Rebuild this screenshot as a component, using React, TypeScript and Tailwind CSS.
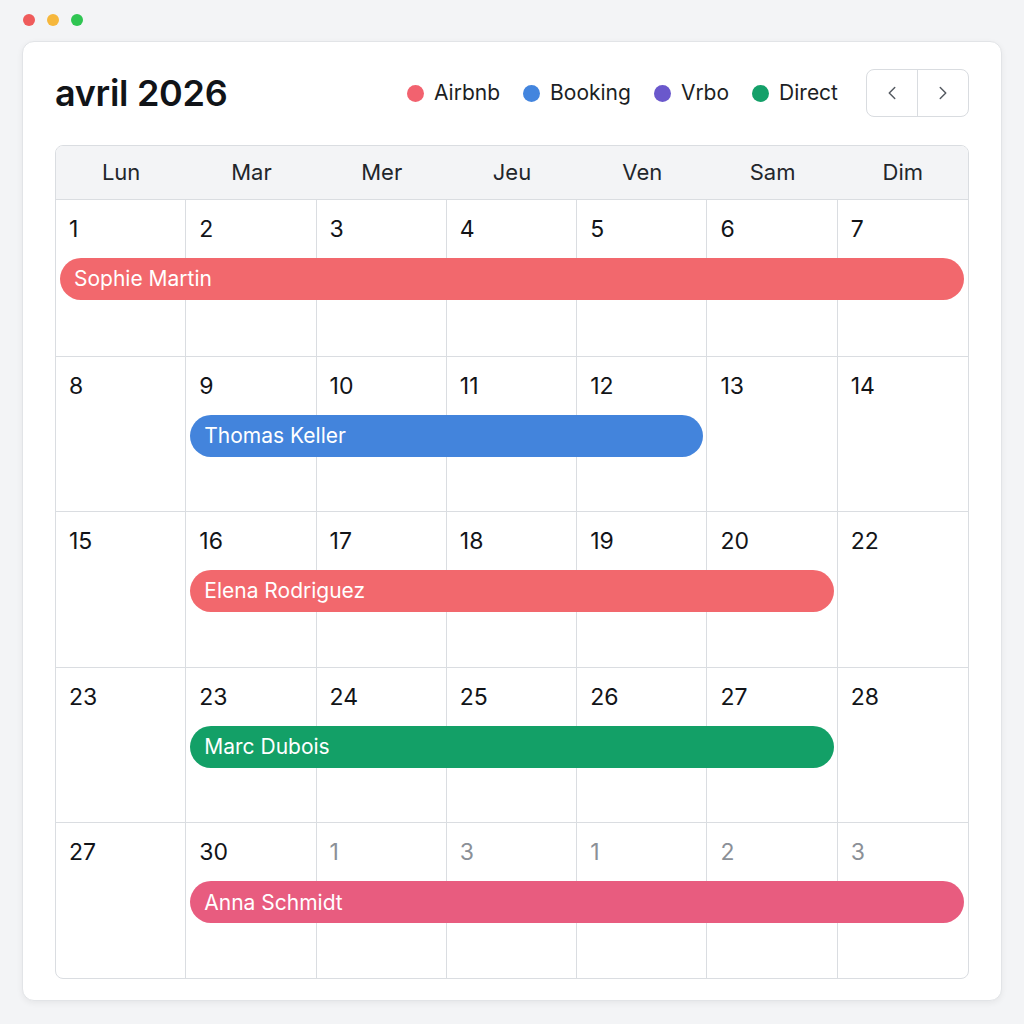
import { ChevronLeft, ChevronRight } from 'lucide-react';

type Booking = {
  name: string;
  start: number; // colonne 1-7
  span: number;
  color: string;
};

type Week = {
  days: { n: number; muted?: boolean }[];
  booking: Booking;
};

const DAY_NAMES = ['Lun', 'Mar', 'Mer', 'Jeu', 'Ven', 'Sam', 'Dim'];

const COL_START = ['col-start-1', 'col-start-2', 'col-start-3', 'col-start-4', 'col-start-5', 'col-start-6', 'col-start-7'];
const COL_SPAN = ['', 'col-span-1', 'col-span-2', 'col-span-3', 'col-span-4', 'col-span-5', 'col-span-6', 'col-span-7'];

const LEGEND = [
  { label: 'Airbnb', color: 'bg-[#f2626f]' },
  { label: 'Booking', color: 'bg-[#4385de]' },
  { label: 'Vrbo', color: 'bg-[#6a58cc]' },
  { label: 'Direct', color: 'bg-[#14a069]' },
];

const WEEKS: Week[] = [
  {
    days: [1, 2, 3, 4, 5, 6, 7].map((n) => ({ n })),
    booking: { name: 'Sophie Martin', start: 1, span: 7, color: 'bg-[#f2686d]' },
  },
  {
    days: [8, 9, 10, 11, 12, 13, 14].map((n) => ({ n })),
    booking: { name: 'Thomas Keller', start: 2, span: 4, color: 'bg-[#4384dc]' },
  },
  {
    days: [15, 16, 17, 18, 19, 20, 22].map((n) => ({ n })),
    booking: { name: 'Elena Rodriguez', start: 2, span: 5, color: 'bg-[#f2686d]' },
  },
  {
    days: [23, 23, 24, 25, 26, 27, 28].map((n) => ({ n })),
    booking: { name: 'Marc Dubois', start: 2, span: 5, color: 'bg-[#13a067]' },
  },
  {
    days: [
      { n: 27 },
      { n: 30 },
      { n: 1, muted: true },
      { n: 3, muted: true },
      { n: 1, muted: true },
      { n: 2, muted: true },
      { n: 3, muted: true },
    ],
    booking: { name: 'Anna Schmidt', start: 2, span: 6, color: 'bg-[#e85c7f]' },
  },
];

export default function App() {
  return (
    <div
      className="min-h-[1024px] w-[1024px] bg-[#f3f4f6] px-[22px] pt-[14px]"
      style={{ fontFamily: 'Inter, "Noto Sans", sans-serif' }}
    >
      {/* fenêtre */}
      <div className="flex gap-[12px] pl-[1px]">
        <div className="w-[12px] h-[12px] rounded-full bg-[#ef5b5b]" />
        <div className="w-[12px] h-[12px] rounded-full bg-[#f6b73c]" />
        <div className="w-[12px] h-[12px] rounded-full bg-[#2fc552]" />
      </div>

      {/* carte */}
      <div className="mt-[15px] w-[980px] rounded-[12px] border border-[#e2e4e7] bg-white px-[32px] pt-[27px] pb-[21px] shadow-[0_2px_6px_rgba(0,0,0,0.06)]">
        {/* en-tête */}
        <div className="flex items-center h-[48px]">
          <h1 className="text-[36px] font-semibold tracking-[-0.3px] text-[#111418] leading-none">avril 2026</h1>
          <div className="ml-auto flex items-center gap-[23px]">
            {LEGEND.map((l) => (
              <div key={l.label} className="flex items-center gap-[10px]">
                <div className={`w-[17px] h-[17px] rounded-full ${l.color}`} />
                <span className="text-[21px] text-[#1c1f24]">{l.label}</span>
              </div>
            ))}
          </div>
          <div className="ml-[28px] flex h-[48px] rounded-[8px] border border-[#d9dce0]">
            <button className="w-[51px] flex items-center justify-center border-r border-[#d9dce0] text-[#555a61]">
              <ChevronLeft size={22} strokeWidth={1.6} />
            </button>
            <button className="w-[50px] flex items-center justify-center text-[#555a61]">
              <ChevronRight size={22} strokeWidth={1.6} />
            </button>
          </div>
        </div>

        {/* calendrier */}
        <div className="mt-[28px] rounded-[8px] border border-[#dadde1] overflow-hidden">
          <div className="grid grid-cols-7 h-[54px] bg-[#f3f4f6] border-b border-[#dadde1]">
            {DAY_NAMES.map((d) => (
              <div key={d} className="flex items-center justify-center text-[22px] text-[#22262b]">
                {d}
              </div>
            ))}
          </div>

          {WEEKS.map((week, wi) => (
            <div
              key={wi}
              className={`grid grid-cols-7 grid-rows-1 h-[155.6px] ${wi > 0 ? 'border-t border-[#dadde1]' : ''}`}
            >
              {week.days.map((day, di) => (
                <div
                  key={di}
                  className={`row-start-1 ${COL_START[di]} ${di < 6 ? 'border-r border-[#dadde1]' : ''} pl-[13px] pt-[13px]`}
                >
                  <span className={`text-[23px] leading-[32px] ${day.muted ? 'text-[#8b9097]' : 'text-[#121418]'}`}>
                    {day.n}
                  </span>
                </div>
              ))}
              <div
                className={`row-start-1 ${COL_START[week.booking.start - 1]} ${COL_SPAN[week.booking.span]} self-start mt-[58px] ml-[4px] mr-[4px] h-[42px] rounded-full ${week.booking.color} flex items-center pl-[14px] text-[21px] text-white`}
              >
                {week.booking.name}
              </div>
            </div>
          ))}
        </div>
      </div>
    </div>
  );
}
